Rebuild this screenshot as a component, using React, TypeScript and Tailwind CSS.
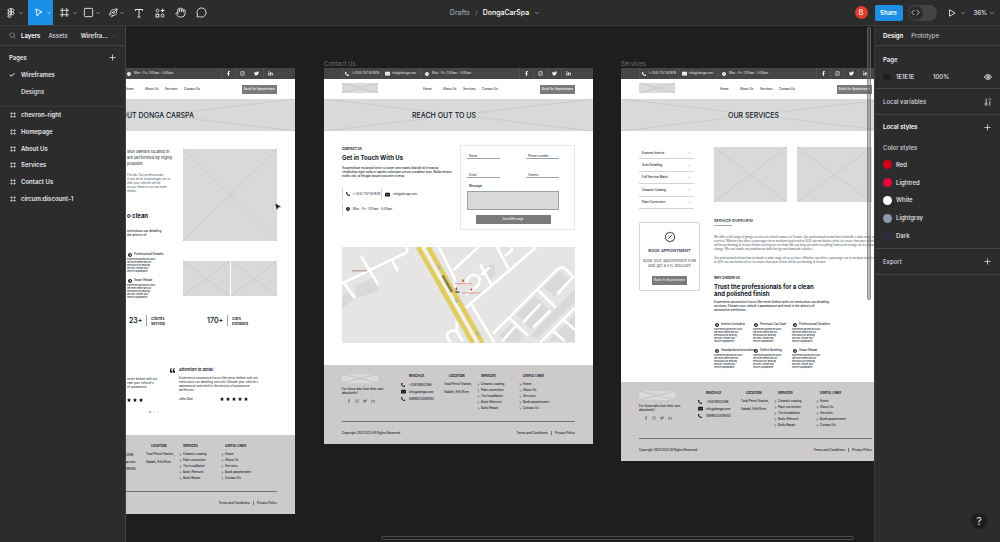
import React, { useState } from 'react';
import {
  Check,
  ChevronDown,
  ChevronRight,
  ChevronUp,
  Code,
  Eye,
  Figma,
  Hand,
  MessageCircle,
  PenTool,
  Plus,
  Search,
  Square,
} from 'lucide-react';
import {
  FaChevronCircleRight,
  FaClock,
  FaEnvelope,
  FaFacebookF,
  FaInstagram,
  FaLinkedinIn,
  FaPhoneAlt,
  FaQuoteLeft,
  FaStar,
  FaTwitter,
} from 'react-icons/fa';

const pages = ['Wireframes', 'Designs'];
const layers = ['chevron-right', 'Homepage', 'About Us', 'Services', 'Contact Us', 'circum:discount-1'];

const colorStyles = [
  { name: 'Red', swatch: 'bg-[#d0021b] rounded-full' },
  { name: 'Lightred', swatch: 'bg-[#e6063c] rounded-full' },
  { name: 'White', swatch: 'bg-white rounded-full' },
  { name: 'Lightgray', swatch: 'bg-[#8d99ae] rounded-full' },
  { name: 'Dark', swatch: 'bg-[#2b2b42] rounded-full' },
];

const serviceLinks = ['Ceramic coating', 'Paint correction', 'Tint installation', 'Body Alterunit', 'Body Repair'];
const usefulLinks = ['Home', 'About Us', 'Services', 'Book appointment', 'Contact Us'];
const serviceMenu = ['Express Interior', 'Auto Detailing', 'Full Service Wash', 'Ceramic Coating', 'Paint Correction'];
const features = [
  'Interior Included',
  'Premium Car Care',
  'Professional Detailers',
  'Standardized procedure',
  'Online Booking',
  'Smart Repair',
];

/* ---------- toolbar ---------- */

const ToolCaret = () => <ChevronDown className="size-[6px] text-gray-400" strokeWidth={3} />;

const FrameIcon = ({ className }: { className: string }) => (
  <svg viewBox="0 0 10 10" className={className} fill="none" stroke="currentColor" strokeWidth="1">
    <path d="M2.5 0 V10 M7.5 0 V10 M0 2.5 H10 M0 7.5 H10" />
  </svg>
);

const Toolbar: React.FC = () => {
  const [devMode, setDevMode] = useState(false);

  return (
    <header className="grid h-[26px] shrink-0 grid-cols-[1fr_auto_1fr] items-center border-b border-[#3a3a3a] bg-[#2c2c2c] text-gray-200">
      <div className="flex h-full items-center">
        <button aria-label="Main menu" className="ml-[3px] flex h-full w-[25px] items-center gap-[2px] pl-[3px]">
          <Figma className="size-[10px]" strokeWidth={2} />
          <ToolCaret />
        </button>
        <button aria-label="Move" className="flex h-full w-[25px] items-center gap-[3px] bg-[#1a8fe3] pl-[6px]">
          <svg viewBox="0 0 10 10" className="size-[9px]" fill="none" stroke="white" strokeWidth="1">
            <path d="M2 1 L9 4.6 L5.6 5.8 L3.6 9 Z" strokeLinejoin="round" />
          </svg>
          <ChevronDown className="size-[6px] text-blue-200" strokeWidth={3} />
        </button>
        <button aria-label="Frame" className="flex h-full w-[25px] items-center gap-[3px] pl-[7px]">
          <FrameIcon className="size-[9px]" />
          <ToolCaret />
        </button>
        <button aria-label="Rectangle" className="flex h-full w-[25px] items-center gap-[1px] pl-[5px]">
          <Square className="size-[11px]" strokeWidth={2} />
          <ToolCaret />
        </button>
        <button aria-label="Pen" className="flex h-full w-[25px] items-center gap-[1px] pl-[5px]">
          <PenTool className="size-[10px] -scale-x-100" />
          <ToolCaret />
        </button>
        <button aria-label="Text" className="flex h-full w-[21px] items-center justify-center">
          <svg viewBox="0 0 10 10" className="size-[10px]" fill="none" stroke="currentColor" strokeWidth="1">
            <path d="M1.5 3 V1.5 H8.5 V3 M5 1.5 V9 M3.6 9 H6.4" />
          </svg>
        </button>
        <button aria-label="Resources" className="flex h-full w-[21px] items-center justify-center">
          <svg viewBox="0 0 10 10" className="size-[10px]" fill="none" stroke="currentColor" strokeWidth="1">
            <path d="M2.5 0.8 L4.2 2.5 L2.5 4.2 L0.8 2.5 Z" />
            <path d="M7.6 0.6 V4.4 M5.7 2.5 H9.5" />
            <rect x="1" y="6.2" width="2.8" height="2.8" />
            <circle cx="7.6" cy="7.6" r="1.5" />
          </svg>
        </button>
        <button aria-label="Hand" className="flex h-full w-[21px] items-center justify-center">
          <Hand className="size-[11px]" />
        </button>
        <button aria-label="Comment" className="flex h-full w-[21px] items-center justify-center">
          <MessageCircle className="size-[11px]" />
        </button>
      </div>

      <div className="flex items-center gap-[5px] pr-[10px] text-[7px] font-medium leading-none">
        <a href="#drafts" className="text-gray-400">Drafts</a>
        <span className="text-gray-500">/</span>
        <button className="flex items-center gap-[5px] text-white">
          DongaCarSpa
          <ToolCaret />
        </button>
      </div>

      <div className="flex items-center justify-end text-[7px] leading-none">
        <span className="mr-[7px] flex size-[13px] items-center justify-center rounded-full bg-[#e03e2d] text-white">B</span>
        <button className="mr-[5px] h-[16px] w-[28px] rounded-[2px] bg-[#1a8fe3] text-[6px] font-semibold text-white">Share</button>
        <button
          role="switch"
          aria-label="Dev mode"
          aria-checked={devMode}
          onClick={() => setDevMode(!devMode)}
          className={`mr-[11px] flex h-[16px] w-[29px] items-center rounded-full bg-[#444444] p-px ${devMode ? 'justify-end' : ''}`}
        >
          <span className="flex size-[14px] items-center justify-center rounded-full bg-[#2c2c2c]">
            <Code className="size-[9px]" />
          </span>
        </button>
        <button aria-label="Present" className="mr-[8px] flex items-center gap-[4px]">
          <svg viewBox="0 0 8 8" className="size-[8px]" fill="none" stroke="currentColor" strokeWidth="0.9">
            <path d="M1.5 0.8 L7 4 L1.5 7.2 Z" strokeLinejoin="round" />
          </svg>
          <ToolCaret />
        </button>
        <button className="mr-[5px] flex items-center gap-[2px] text-[6px] font-medium">
          36%
          <ToolCaret />
        </button>
      </div>
    </header>
  );
};

/* ---------- side panels ---------- */

const LayersPanel: React.FC = () => {
  const [page, setPage] = useState('Wireframes');

  return (
    <aside className="w-[126px] shrink-0 border-r border-[#444444] bg-[#2c2c2c] text-[6px] font-semibold leading-none text-gray-200">
      <div className="flex h-[20px] items-center border-b border-[#444444] pl-[9px] pr-[8px]">
        <Search className="mr-[5px] size-[7px] text-gray-400" />
        <button className="mr-[8px] text-white">Layers</button>
        <button className="font-medium text-gray-300">Assets</button>
        <button className="ml-auto flex items-center gap-[4px]">
          Wirefra...
          <ChevronUp className="size-[5px] text-gray-500" />
        </button>
      </div>
      <div className="h-[61px] border-b border-[#3a3a3a] pt-[3px]">
        <div className="flex h-[17px] items-center justify-between pl-[9px] pr-[8px]">
          <h2>Pages</h2>
          <button aria-label="Add page">
            <Plus className="size-[9px]" strokeWidth={2} />
          </button>
        </div>
        {pages.map((name) => (
          <button key={name} onClick={() => setPage(name)} className="flex h-[17px] w-full items-center pl-[9px]">
            <span className="w-[12px]">{page === name && <Check className="size-[6px] text-white" strokeWidth={4} />}</span>
            <span className={page === name ? 'font-semibold' : 'font-medium'}>{name}</span>
          </button>
        ))}
      </div>
      <ul className="grid h-[100px] grid-rows-6">
        {layers.map((name) => (
          <li key={name} className="flex">
            <button className="flex w-full items-center gap-[5px] pl-[10px]">
              <FrameIcon className="size-[6px] text-gray-300" />
              {name}
            </button>
          </li>
        ))}
      </ul>
    </aside>
  );
};

const DesignPanel: React.FC = () => (
  <aside className="relative w-[126px] shrink-0 border-l border-[#3a3a3a] bg-[#2c2c2c] text-[6px] leading-none text-gray-200">
    <div className="flex h-[20px] items-center gap-[8px] border-b border-[#444444] px-[8px]">
      <button className="font-semibold text-white">Design</button>
      <button className="text-gray-300">Prototype</button>
    </div>
    <section className="h-[43px] border-b border-[#444444] px-[8px] pt-[5px]">
      <h2 className="flex h-[17px] items-center font-semibold">Page</h2>
      <div className="flex h-[17px] items-center font-medium">
        <span className="mr-[5px] size-[8px] border border-[#242424] bg-[#1e1e1e]" />
        <span className="w-[37px]">1E1E1E</span>
        <span>100%</span>
        <button aria-label="Toggle background" className="ml-auto">
          <Eye className="size-[8px]" strokeWidth={3} />
        </button>
      </div>
    </section>
    <section className="flex h-[26px] items-center justify-between border-b border-[#444444] px-[8px]">
      <h2 className="font-medium text-gray-300">Local variables</h2>
      <button aria-label="Open variables">
        <svg viewBox="0 0 8 8" className="size-[8px]" fill="none" stroke="currentColor" strokeWidth="0.8">
          <path d="M2.2 0.5 V5 M5.8 3 V7.5 M4.6 1.8 L5.8 0.6 L7 1.8" />
          <circle cx="2.2" cy="6.2" r="1.1" />
        </svg>
      </button>
    </section>
    <section className="h-[134px] border-b border-[#444444] px-[8px]">
      <div className="flex h-[24px] items-center justify-between">
        <h2 className="font-semibold text-white">Local styles</h2>
        <button aria-label="Add style">
          <Plus className="size-[9px]" strokeWidth={2} />
        </button>
      </div>
      <h3 className="flex h-[17px] items-center font-medium text-gray-300">Color styles</h3>
      <ul className="grid h-[89px] grid-rows-5">
        {colorStyles.map((style) => (
          <li key={style.name} className="flex items-center gap-[4px] font-medium">
            <span className={`size-[9px] ${style.swatch}`} />
            {style.name}
          </li>
        ))}
      </ul>
    </section>
    <section className="flex h-[26px] items-center justify-between border-b border-[#444444] px-[8px]">
      <h2 className="font-medium text-gray-300">Export</h2>
      <button aria-label="Add export">
        <Plus className="size-[9px]" strokeWidth={2} />
      </button>
    </section>
    <button
      aria-label="Help"
      className="absolute bottom-[13px] right-[13px] size-[16px] rounded-full bg-[#1e1e1e] text-[10px] leading-none text-gray-200"
    >
      ?
    </button>
  </aside>
);

/* ---------- pieces shared by the wireframes ---------- */

const Placeholder = ({ className, line = '#cacaca' }: { className: string; line?: string }) => (
  <div className={`bg-[#d9d9d9] ${className}`}>
    <svg viewBox="0 0 100 100" preserveAspectRatio="none" className="size-full">
      <path d="M0 0 L100 100 M100 0 L0 100" stroke={line} strokeWidth="1" vectorEffect="non-scaling-stroke" fill="none" />
    </svg>
  </div>
);

const BookButton = () => (
  <button className="h-[9px] w-[35px] bg-[#7a7a7a] text-[3px] leading-none text-white">Book An Appointment</button>
);

const socials = [FaFacebookF, FaInstagram, FaTwitter, FaLinkedinIn];

const SiteHeader = ({ title, titlePad }: { title: string; titlePad: string }) => (
  <>
    <div className="flex h-[11px] items-center bg-[#454545] px-[18px] text-[3px] leading-none text-gray-200">
      <span className="flex h-full w-[39px] items-center gap-[3px] border-l border-[#505050] pl-[2px]">
        <FaPhoneAlt className="size-[4px] text-white" />
        (+254) 757 557678
      </span>
      <span className="flex h-full w-[39px] items-center gap-[2px] border-l border-[#505050] pl-[3px]">
        <FaEnvelope className="size-[5px] text-white" />
        info@donga.com
      </span>
      <span className="flex h-full items-center gap-[3px] border-l border-[#505050] pl-[4px]">
        <FaClock className="size-[4px] text-white" />
        Mon - Fri: 7:00am - 5:00pm
      </span>
      <span className="ml-auto flex h-full">
        {socials.map((Icon, i) => (
          <a key={i} href="#social" className="flex w-[14px] items-center justify-center border-l border-[#505050]">
            <Icon className="size-[5px] text-white" />
          </a>
        ))}
      </span>
    </div>
    <nav className="flex h-[20px] items-center px-[18px] text-[3px] font-medium leading-none text-gray-800">
      <Placeholder className="mb-[2px] mr-[45px] h-[10px] w-[36px]" />
      <a href="#home" className="w-[20px]">Home</a>
      <a href="#about" className="w-[20px]">About Us</a>
      <a href="#services" className="w-[19px]">Services</a>
      <a href="#contact" className="mr-auto">Contact Us</a>
      <BookButton />
    </nav>
    <div className="grid h-[32px] bg-[#d9d9d9]">
      <Placeholder className="col-start-1 row-start-1 h-[32px]" />
      <h1
        className={`col-start-1 row-start-1 flex items-center justify-center text-[7px] font-medium leading-none text-gray-900 ${titlePad}`}
      >
        <span className="bg-[#d9d9d9] px-[2px]">{title}</span>
      </h1>
    </div>
  </>
);

const FooterLinks = ({ title, items, className }: { title: string; items: string[]; className: string }) => (
  <div className={className}>
    <h4 className="mb-[3px] pl-[4px] font-bold leading-[4px]">{title}</h4>
    {items.map((item) => (
      <a key={item} href="#link" className="flex h-[6px] items-center gap-[1px]">
        <ChevronRight className="size-[3px]" strokeWidth={4} />
        {item}
      </a>
    ))}
  </div>
);

const SiteFooter: React.FC = () => (
  <footer className="h-[79px] bg-[#cccaca] px-[18px] pt-[9px] text-[3px] font-medium leading-[4px] whitespace-nowrap text-gray-900">
    <div className="flex h-[47px]">
      <div className="w-[59px]">
        <Placeholder className="mb-[4px] h-[9px] w-[36px]" line="#c2c2c2" />
        <p>
          For those who love their cars
          <br />
          absolutely!
        </p>
        <div className="mt-[4px] flex gap-[4px] pl-[5px] text-gray-500">
          <FaFacebookF className="size-[4px]" />
          <FaInstagram className="size-[4px]" />
          <FaTwitter className="size-[4px]" />
          <FaLinkedinIn className="size-[4px]" />
        </div>
      </div>
      <div className="w-[43px]">
        <h4 className="mb-[3px] pl-[8px] font-bold">REACH US</h4>
        <p className="flex h-[7px] items-center gap-[4px]"><FaPhoneAlt className="size-[4px]" />+25476932396</p>
        <p className="flex h-[7px] items-center gap-[3px]"><FaEnvelope className="size-[5px]" />info@donga.com</p>
        <p className="flex h-[7px] items-center gap-[4px]"><FaPhoneAlt className="size-[4px]" />0699033309803</p>
      </div>
      <div className="w-[33px]">
        <h4 className="mb-[4px] pl-[5px] font-bold">LOCATION</h4>
        <p className="mb-[4px]">Total Petrol Station,</p>
        <p>Sabaki, Athi River</p>
      </div>
      <FooterLinks title="SERVICES" items={serviceLinks} className="w-[42px]" />
      <FooterLinks title="USEFUL LINKS" items={usefulLinks} className="w-[40px]" />
    </div>
    <div className="flex items-center border-t border-gray-500 pt-[9px]">
      <span className="mr-auto">Copyright 2023 DCS All Rights Reserved</span>
      <a href="#terms">Terms and Conditions</a>
      <span className="mx-[3px] h-[4px] border-l border-gray-500" />
      <a href="#privacy">Privacy Policy</a>
    </div>
  </footer>
);

const FeatureText = () => (
  <p className="text-[2px] font-medium leading-[3px] text-gray-900">
    Experience automotive luxury
    <br />
    like never before with our
    <br />
    meticulous car detailing
    <br />
    services. Elevate your
    <br />
    vehicle's appearance
  </p>
);

const Feature = ({ name }: { name: string }) => (
  <div className="h-[26px]">
    <h4 className="flex h-[7px] items-center gap-[2px] pl-[1px] text-[3px] font-medium leading-none">
      <FaChevronCircleRight className="size-[4px] shrink-0" />
      {name}
    </h4>
    <FeatureText />
  </div>
);

const Stars = ({ count }: { count: number }) => (
  <span className="flex gap-[2px]">
    {Array.from({ length: count }, (_, i) => (
      <FaStar key={i} className="size-[4px]" />
    ))}
  </span>
);

/* ---------- About Us ---------- */

const AboutFrame: React.FC = () => (
  <article className="w-[269px] bg-white whitespace-nowrap">
    <SiteHeader title="ABOUT DONGA CARSPA" titlePad="pr-[15px]" />
    <div className="h-[304px] pl-[101px] pr-[18px] pt-[18px] text-[3px] leading-[4px] text-gray-900">
      <div className="flex h-[166px] justify-between">
        <div>
          <p className="mb-[6px] text-[4px] leading-[6px]">
            sion owners located in
            <br />
            are performed by highly
            <br />
            problem.
          </p>
          <p className="text-[3px] leading-[4px] text-gray-600">
            Florida. Our professionals
            <br />
            if you drive a passenger car or
            <br />
            that your vehicle will be
            <br />
            as you leave a visit we meet
            <br />
            needs.
          </p>
          <h2 className="mb-[9px] mt-[19px] text-[6px] font-bold leading-[8px]">o clean</h2>
          <p className="mb-[14px] font-medium">
            meticulous car detailing
            <br />
            the artistry of
          </p>
          <Feature name="Professional Detailer" />
          <Feature name="Smart Repair" />
        </div>
        <div className="w-[94px]">
          <Placeholder className="mb-[20px] h-[92px]" />
          <div className="grid grid-cols-2 gap-px">
            <Placeholder className="h-[35px]" />
            <Placeholder className="h-[35px]" />
          </div>
        </div>
      </div>
      <div className="flex h-[11px] items-center">
        <div className="flex w-[80px] items-center pl-[2px]">
          <strong className="w-[17px] text-[7px] font-semibold">23+</strong>
          <span className="h-[11px] border-l border-gray-400 pl-[4px] pt-[1px] text-[4px] leading-[5px] font-semibold">
            Clients
            <br />
            Served
          </span>
        </div>
        <div className="flex items-center">
          <strong className="w-[20px] text-[7px] font-semibold">170+</strong>
          <span className="h-[11px] border-l border-gray-400 pl-[4px] pt-[1px] text-[4px] leading-[5px] font-semibold">
            Cars
            <br />
            Detailed
          </span>
        </div>
      </div>
      <div className="flex pt-[42px]">
        <div className="w-[43px] pt-[9px]">
          <p className="mb-[9px]">
            never before with our
            <br />
            vate your vehicle's
            <br />
            of automotive
          </p>
          <Stars count={3} />
        </div>
        <FaQuoteLeft className="mr-[4px] size-[5px]" />
        <div>
          <h3 className="mb-[4px] text-[4px] font-semibold leading-[4px]">Attention to detail</h3>
          <p className="mb-[5px]">
            Experience automotive luxury like never before with our
            <br />
            meticulous car detailing services. Elevate your vehicle's
            <br />
            appearance and revel in the artistry of automotive
            <br />
            perfection.
          </p>
          <div className="flex items-center">
            <span className="w-[41px] font-medium">John Doe</span>
            <Stars count={5} />
          </div>
        </div>
      </div>
      <div className="mt-[9px] flex gap-[2px] pl-[22px]">
        <span className="size-[2px] rounded-full bg-gray-400" />
        <span className="size-[2px] rounded-full bg-gray-200" />
        <span className="size-[2px] rounded-full bg-gray-200" />
      </div>
    </div>
    <SiteFooter />
  </article>
);

/* ---------- Contact Us ---------- */

const StreetMap: React.FC = () => (
  <svg viewBox="0 0 695 290" preserveAspectRatio="none" className="h-[96px] w-full bg-[#e6e5e3]" fill="none">
    <g fill="#dad9d7">
      <path d="M35 118 L95 92 L108 132 L45 155 Z M0 145 L22 138 L38 158 L0 185 Z" />
      <path d="M425 60 L455 50 L458 85 L438 98 Z" />
      <path d="M470 265 L505 232 L545 270 L525 288 L490 288 Z" />
      <path d="M520 205 L575 150 L625 195 L565 250 Z" />
      <path d="M600 120 L650 75 L675 100 L635 150 Z" />
      <path d="M615 285 L695 205 L695 288 Z" />
      <path d="M560 270 L695 125 L695 165 L585 275 Z" />
    </g>
    <g stroke="#ffffff" strokeWidth="8" strokeLinejoin="round">
      <path d="M0 110 L192 17 L196 0 M57 28 L108 114 M4 106 L38 155 M148 38 L167 73" />
      <path d="M289 0 L336 95 L338 125 M385 172 L455 290 M367 185 L580 0 M332 70 L407 0" />
      <path d="M462 0 L497 66 M485 28 L505 12 L507 0" />
      <path d="M412 53 L445 113 M415 85 L440 62" />
      <path d="M372 115 C372 88 385 82 400 85 C418 92 410 118 395 125 L368 145" />
      <path d="M450 262 L640 70 Q655 54 668 68 L690 90 L642 142" />
      <path d="M587 132 L637 182 M500 215 L555 268 M592 288 L695 183 M625 250 L665 285 M655 215 L695 250" />
      <path d="M478 284 L517 240 M540 228 L592 172 M570 243 L622 192" />
      <path d="M325 288 C300 262 320 248 342 255 L360 285 M342 255 L342 225" />
    </g>
    <path d="M242 0 L404 290" stroke="#f3f1ea" strokeWidth="20" />
    <g stroke="#dfcd62" strokeWidth="14">
      <path d="M227 0 L390 290" />
      <path d="M257 0 L419 290" />
    </g>
    <path d="M300 86 L328 136" stroke="#8d8343" strokeWidth="8" />
    <path d="M286 55 L292 67 M338 155 L345 168 M400 255 L407 267" stroke="#b7b5a5" strokeWidth="7" />
    <path d="M336 111 H388 M358 139 H414" stroke="#d99a8e" strokeWidth="3" />
    <path d="M30 72 H75" stroke="#a58f8a" strokeWidth="3" />
    <path d="M361 98 V105 M386 125 V132" stroke="#c94f41" strokeWidth="5" />
    <path d="M341 122 V130 M338 136 H350" stroke="#555555" strokeWidth="4" />
  </svg>
);

const contactItem = 'flex h-[12px] items-center gap-[3px] border-l border-gray-300 pl-[3px]';
const contactInput =
  'h-[6px] w-[33px] rounded-none border-b border-gray-400 pl-[2px] text-[3px] leading-none placeholder:text-gray-800';

const ContactFrame: React.FC = () => (
  <article className="w-[269px] bg-white whitespace-nowrap">
    <SiteHeader title="REACH OUT TO US" titlePad="pr-[29px]" />
    <div className="h-[234px] px-[18px] pt-[14px] text-[3px] leading-[4px] text-gray-900">
      <div className="mb-[17px] flex h-[85px] justify-between">
        <div>
          <h4 className="mt-[2px] font-bold">CONTACT US</h4>
          <h2 className="mb-[4px] mt-[3px] text-[6px] font-bold leading-[8px]">Get in Touch With Us</h2>
          <p className="font-medium">
            Suspendisse euismod tortor sit amet sem mattis blandit id in massa
            <br />
            vestibulum eget nulla ut sapien vulputate cursus curabitur quis. Nulla tempor
            <br />
            mollis nisl, at feugiat ipsum posuere viverra.
          </p>
          <div className="mt-[10px] grid grid-cols-[39px_auto] gap-y-[3px]">
            <span className={contactItem}><FaPhoneAlt className="size-[4px]" />(+254) 757 557678</span>
            <span className={contactItem}><FaEnvelope className="size-[5px]" />info@donga.com</span>
            <span className={`col-span-2 ${contactItem}`}><FaClock className="size-[4px]" />Mon - Fri: 7:00am - 5:00pm</span>
          </div>
        </div>
        <form className="w-[115px] border border-gray-200 pl-[6px] pr-[15px] pt-[7px]">
          <div className="flex justify-between">
            <input aria-label="Name" placeholder="Name" className={contactInput} />
            <input aria-label="Phone number" placeholder="Phone number" className={contactInput} />
          </div>
          <div className="mt-[13px] flex justify-between">
            <input aria-label="Email" placeholder="Email" className={contactInput} />
            <input aria-label="Subject" placeholder="Subject" className={contactInput} />
          </div>
          <label htmlFor="message" className="mt-[6px] block pl-[2px] font-medium">Message</label>
          <textarea id="message" className="mt-[3px] block h-[19px] w-full resize-none border border-gray-400 bg-[#d9d9d9]" />
          <button type="button" className="mx-auto mt-[5px] block h-[9px] w-[75px] bg-[#7a7a7a] text-[3px] leading-none text-white">
            Send Message
          </button>
        </form>
      </div>
      <StreetMap />
    </div>
    <SiteFooter />
  </article>
);

/* ---------- Services ---------- */

const ServicesFrame: React.FC = () => (
  <article className="w-[269px] bg-white whitespace-nowrap">
    <SiteHeader title="OUR SERVICES" titlePad="pr-[4px]" />
    <div className="flex h-[251px] gap-[14px] px-[18px] pt-[16px] text-[3px] leading-[4px] text-gray-900">
      <div className="w-[61px] shrink-0">
        <ul className="mb-[13px] grid h-[62px] w-[55px] grid-rows-5 font-medium">
          {serviceMenu.map((item) => (
            <li key={item} className="border-b border-gray-300">
              <a href="#service" className="flex h-full items-center justify-between px-[3px]">
                {item}
                <ChevronRight className="size-[3px]" />
              </a>
            </li>
          ))}
        </ul>
        <div className="flex h-[69px] flex-col items-center rounded-[2px] border border-gray-300 pt-[8px] text-[4px] leading-[5px] text-gray-600">
          <svg viewBox="0 0 24 24" className="size-[12px] text-gray-800" fill="none" stroke="currentColor" strokeWidth="1.8">
            <path d="M12 2 L14.6 4 L17.9 3.8 L18.9 6.9 L21.6 8.8 L20.5 12 L21.6 15.2 L18.9 17.1 L17.9 20.2 L14.6 20 L12 22 L9.4 20 L6.1 20.2 L5.1 17.1 L2.4 15.2 L3.5 12 L2.4 8.8 L5.1 6.9 L6.1 3.8 L9.4 4 Z" />
            <path d="M8.5 15.5 L15.5 8.5 M9 9 h0.6 M14.6 15 h0.6" />
          </svg>
          <h3 className="mb-[5px] mt-[5px] font-semibold text-gray-700">BOOK APPOINTMENT</h3>
          <p className="mb-[8px] text-center">
            Book your appointment now
            <br />
            and get a 5% discount
          </p>
          <BookButton />
        </div>
      </div>
      <div className="w-[160px] shrink-0">
        <div className="mb-[16px] flex gap-[10px]">
          <Placeholder className="h-[55px] w-[73px] shrink-0" />
          <Placeholder className="h-[55px] w-[75px] shrink-0" />
        </div>
        <h3 className="w-[18px] border-b border-gray-400 pb-[1px] text-[4px] font-medium leading-[6px]">SERVICE OVERVIEW</h3>
        <div className="mt-[9px] font-[Lato,sans-serif] text-gray-600">
          <p className="mb-[5px]">
            We offer a full range of garage services to vehicle owners in Tucson. Our professionals know how to handle a wide range of
            <br />
            services. Whether you drive a passenger car or medium sized truck or SUV, our mechanics strive to ensure that your vehicle
            <br />
            will be performing at its best before leaving our car shop. We can help you with everything from an oil change to an engine
            <br />
            change. We can handle any problem on both foreign and domestic vehicles.
          </p>
          <p>
            Our professionals know how to handle a wide range of car services. Whether you drive a passenger car or medium sized truck
            <br />
            or SUV, our mechanics strive to ensure that your vehicle will be performing at its best.
          </p>
        </div>
        <h4 className="mt-[12px] font-bold">WHY CHOOSE US</h4>
        <h2 className="mb-[3px] mt-[3px] text-[6px] font-bold leading-[7px]">
          Trust the professionals for a clean
          <br />
          and polished finish
        </h2>
        <p className="mb-[9px] font-medium">
          Experience automotive luxury like never before with our meticulous car detailing
          <br />
          services. Elevate your vehicle's appearance and revel in the artistry of
          <br />
          automotive perfection.
        </p>
        <div className="grid grid-cols-[39px_39px_39px]">
          {features.map((name) => (
            <Feature key={name} name={name} />
          ))}
        </div>
      </div>
    </div>
    <SiteFooter />
  </article>
);

/* ---------- canvas ---------- */

// frames sit at their own spot on the free canvas
const Canvas: React.FC = () => (
  <main className="relative min-w-0 flex-1 overflow-hidden bg-[#1e1e1e]">
    <div className="absolute left-[-100px] top-[42px]">
      <AboutFrame />
    </div>
    <div className="absolute left-[198px] top-[34px]">
      <h2 className="h-[8px] text-[6px] leading-[8px] text-[#6f6f6f]">Contact Us</h2>
      <ContactFrame />
    </div>
    <div className="absolute left-[495px] top-[34px]">
      <h2 className="h-[8px] text-[6px] leading-[8px] text-[#6f6f6f]">Services</h2>
      <ServicesFrame />
    </div>
    <svg viewBox="0 0 8 10" className="absolute left-[148px] top-[176px] h-[10px] w-[8px]">
      <path d="M1 1 L7.4 5 L4.4 5.6 L2.8 8.6 Z" fill="#111111" stroke="#ffffff" strokeWidth="0.4" />
    </svg>
    <div className="absolute right-[3px] top-[1px] h-[273px] w-[4px] rounded-full border border-[#777777]/60 bg-[#555555]/40" />
    <div className="absolute bottom-[2px] left-[255px] right-[20px] h-[4px] rounded-full border border-[#4d4d4d]" />
  </main>
);

const App: React.FC = () => (
  <div className="flex h-screen flex-col overflow-hidden bg-[#1e1e1e] font-[Inter,'Liberation_Sans',sans-serif]">
    <Toolbar />
    <div className="flex min-h-0 flex-1">
      <LayersPanel />
      <Canvas />
      <DesignPanel />
    </div>
  </div>
);

export default App;
